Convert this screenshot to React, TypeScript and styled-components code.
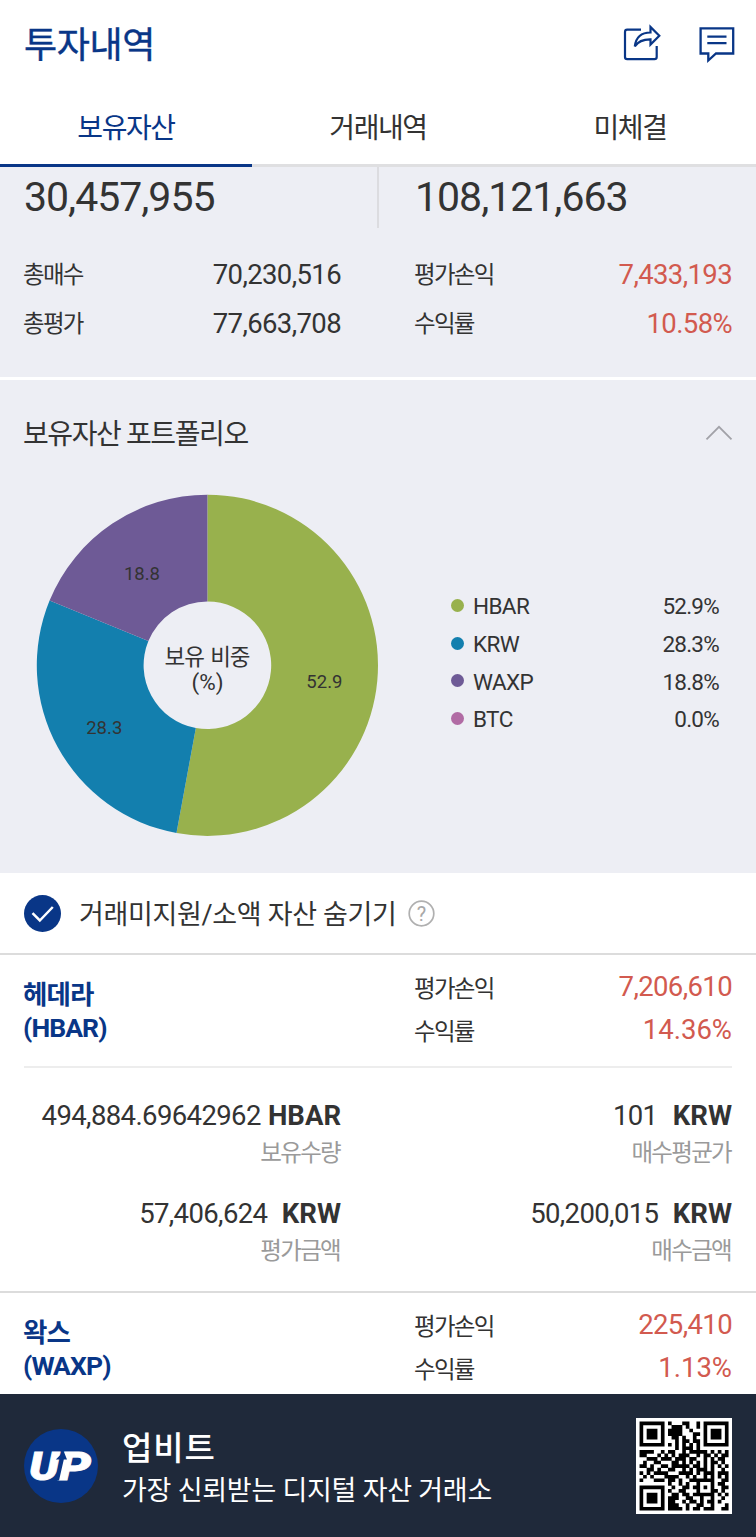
import React from 'react';
import styled, { createGlobalStyle } from 'styled-components';

const ink = '#333333';
const navy = '#093687';
const red = '#d25a4f';
const panel = '#edeef4';

const GlobalStyle = createGlobalStyle`
  body { margin: 0; background: #fff; }
  * { box-sizing: border-box; }
`;

const Page = styled.div`
  width: 756px;
  height: 1537px;
  overflow: hidden;
  display: flex;
  flex-direction: column;
  background: #fff;
  color: ${ink};
  font-family: Roboto, 'Noto Sans CJK KR', sans-serif;
`;

const Header = styled.header`
  display: flex;
  align-items: center;
  justify-content: space-between;
  height: 88px;
  padding: 0 19px 0 24px;
  color: ${navy};
`;

const Title = styled.h1`
  margin: 0;
  padding-top: 4px;
  font-size: 36px;
  line-height: 48px;
  font-weight: 400;
  letter-spacing: -0.4px;
  -webkit-text-stroke: 0.4px ${navy};
`;

const Actions = styled.div`
  display: flex;
  gap: 36px;
`;

const Tabs = styled.nav`
  display: flex;
  height: 79px;
  border-bottom: 3px solid #dfdfe1;
`;

const Tab = styled.div<{ $active?: boolean }>`
  flex: 1;
  height: 79px;
  padding-top: 21px;
  text-align: center;
  font-size: 28px;
  line-height: 40px;
  letter-spacing: -1.4px;
  color: ${(p) => (p.$active ? navy : ink)};
  border-bottom: ${(p) => (p.$active ? `3px solid ${navy}` : '0')};
`;

const Summary = styled.section`
  height: 210px;
  background: ${panel};
`;

const Totals = styled.div`
  display: flex;
  height: 61px;
`;

const Total = styled.div<{ $divided?: boolean }>`
  width: ${(p) => (p.$divided ? 379 : 377)}px;
  padding-left: ${(p) => (p.$divided ? 24 : 36)}px;
  border-right: ${(p) => (p.$divided ? '2px solid #dcdce0' : '0')};
  font-size: 41px;
  line-height: 61px;
  letter-spacing: -1px;
`;

const StatGrid = styled.div`
  display: grid;
  grid-template-columns: 317px 317px;
  column-gap: 74px;
  grid-auto-rows: 48.5px;
  padding: 23px 24px 0;
`;

const Stat = styled.div`
  display: flex;
  justify-content: space-between;
  align-items: center;
`;

const Label = styled.span<{ $muted?: boolean; $drop?: boolean }>`
  margin: ${(p) => (p.$muted ? '-3px 1px 0 0' : p.$drop ? '5px 0 0 -1px' : '0 0 0 -1px')};
  font-size: 23.5px;
  line-height: 32px;
  letter-spacing: -1.7px;
  color: ${(p) => (p.$muted ? '#9a9a9a' : ink)};
`;

const Amount = styled.span<{ $gain?: boolean; $loose?: boolean }>`
  font-size: 27.5px;
  line-height: 48px;
  letter-spacing: ${(p) => (p.$loose ? 0 : -0.62)}px;
  white-space: pre;
  color: ${(p) => (p.$gain ? red : ink)};
`;

const Unit = styled.b<{ $gap: number }>`
  margin-left: ${(p) => p.$gap}px;
  font-weight: 700;
  letter-spacing: 0;
`;

const Portfolio = styled.section`
  height: 493px;
  margin-top: 3px;
  background: ${panel};
`;

const PortfolioHead = styled.div`
  display: flex;
  justify-content: space-between;
  align-items: center;
  height: 108px;
  padding: 0 23px 0 24px;
`;

const PortfolioTitle = styled.h2`
  margin: 2px 0 0 -1px;
  font-size: 28px;
  font-weight: 400;
  line-height: 40px;
  letter-spacing: -1.4px;
`;

const ChartArea = styled.div`
  display: flex;
  padding: 6px 37px 0 36px;
`;

const Legend = styled.ul`
  flex: 1;
  list-style: none;
  margin: 93px 0 0 72px;
  padding: 0;
`;

const LegendRow = styled.li`
  display: flex;
  align-items: center;
  height: 37.8px;
  font-size: 22.5px;
  line-height: 38px;
  letter-spacing: -0.6px;
`;

const Dot = styled.i<{ $color: string }>`
  width: 13px;
  height: 13px;
  margin: -1px 9px 0 0;
  border-radius: 50%;
  background: ${(p) => p.$color};
`;

const LegendValue = styled.span`
  margin-left: auto;
  letter-spacing: -0.75px;
`;

const FilterBar = styled.div`
  display: flex;
  align-items: center;
  height: 82px;
  padding: 0 24px;
  border-bottom: 2px solid #dcdcdc;
`;

const FilterText = styled.span`
  margin: 4px 11px 0 18px;
  font-size: 27px;
  line-height: 40px;
  letter-spacing: -0.34px;
`;

const AssetHead = styled.div<{ $ruled?: boolean }>`
  display: flex;
  justify-content: space-between;
  height: 113px;
  margin: 0 24px;
  padding-top: 10px;
  border-bottom: ${(p) => (p.$ruled ? '2px solid #ededed' : '0')};
`;

const AssetName = styled.h3`
  margin: 14px 0 0 -1px;
  font-size: 26.5px;
  line-height: 32.5px;
  font-weight: 700;
  letter-spacing: -0.9px;
  color: ${navy};
`;

const AssetStats = styled.div`
  width: 317px;
  display: grid;
  grid-auto-rows: 43px;
`;

const AssetBody = styled.div`
  display: grid;
  grid-template-columns: 317px 317px;
  column-gap: 74px;
  grid-auto-rows: 98px;
  height: 225px;
  padding: 24px 24px 0;
  border-bottom: 2px solid #dcdcdc;
`;

const Holding = styled.div`
  display: flex;
  flex-direction: column;
  align-items: flex-end;
`;

const Footer = styled.footer`
  display: flex;
  align-items: center;
  flex: none;
  height: 143px;
  padding: 0 24px;
  background: #1f293a;
  color: #fff;
`;

const Assets = styled.main`
  flex: none;
  height: 439px;
  overflow: hidden;
`;

const Brand = styled.div`
  flex: 1;
  margin: 8px 0 0 24px;
`;

const BrandName = styled.div`
  font-size: 33px;
  font-weight: 500;
  line-height: 42px;
  letter-spacing: 0.9px;
`;

const BrandLine = styled.div`
  font-size: 27px;
  line-height: 42px;
  letter-spacing: -0.25px;
`;

const slices = [
  { name: 'HBAR', value: 52.9, color: '#98b14d' },
  { name: 'KRW', value: 28.3, color: '#137fae' },
  { name: 'WAXP', value: 18.8, color: '#6e5a96' },
  { name: 'BTC', value: 0, color: '#b16ba4' },
];

const R = 170.6;
const HOLE = 63.8;
const at = (percent: number, radius: number) => {
  const a = (percent / 100) * Math.PI * 2;
  return [171.4 + radius * Math.sin(a), 171.3 - radius * Math.cos(a)];
};

function Donut() {
  let start = 0;
  return (
    <svg width="343" height="343" viewBox="0 0 343 343" fontFamily="Roboto, 'Noto Sans CJK KR', sans-serif" textAnchor="middle" fill={ink}>
      {slices.filter((s) => s.value > 0).map((s) => {
        const end = start + s.value;
        const large = s.value > 50 ? 1 : 0;
        const d = `M${at(start, R)} A${R} ${R} 0 ${large} 1 ${at(end, R)} L${at(end, HOLE)} A${HOLE} ${HOLE} 0 ${large} 0 ${at(start, HOLE)}Z`;
        const [x, y] = at(start + s.value / 2, 117.5);
        start = end;
        return (
          <g key={s.name}>
            <path d={d} fill={s.color} />
            <text x={x} y={y + 12} fontSize="18.5">{s.value}</text>
          </g>
        );
      })}
      <text x="171" y="170.5" fontSize="22.5" letterSpacing="-1.1" wordSpacing="2">보유 비중</text>
      <text x="171.5" y="196" fontSize="22.5">(%)</text>
    </svg>
  );
}

const ShareIcon = () => (
  <svg width="40" height="40" viewBox="0 0 40 40" fill="none" stroke={navy} strokeWidth="2.2" strokeLinejoin="round">
    <path d="M20 5.7H6.2Q4 5.7 4 8V33Q4 35.2 6.2 35.2H33.5Q35.7 35.2 35.7 33V22" />
    <path d="M13.8 22.3C15 13 21 8.5 29.5 8.5V3L38.3 11.8L29.5 20.5V15.3C22 15.2 17 17.5 13.8 22.3Z" strokeLinejoin="miter" />
  </svg>
);

const ChatIcon = () => (
  <svg width="40" height="40" viewBox="0 0 40 40" fill="none" stroke={navy} strokeWidth="2.3">
    <path d="M3.6 4.3H36.2V29.5H19L11.3 36.5V29.5H3.6Z" />
    <path d="M10.3 12.6H29.5M10.3 19.2H29.5" />
  </svg>
);

const ChevronUp = () => (
  <svg width="28" height="18" viewBox="0 0 28 18" fill="none" stroke="#a2a2a8" strokeWidth="1.8">
    <path d="M1.5 14.3L14 1.8L26.5 14.3" />
  </svg>
);

const CheckIcon = () => (
  <svg width="37" height="37" viewBox="0 0 37 37">
    <circle cx="18.5" cy="18.5" r="18.5" fill={navy} />
    <path d="M8.5 18.2L15.8 25.5L28.8 12" fill="none" stroke="#fff" strokeWidth="2.5" />
  </svg>
);

const HelpIcon = () => (
  <svg width="27" height="27" viewBox="0 0 27 27">
    <circle cx="13.5" cy="13.5" r="12.3" fill="none" stroke="#b0b0b0" strokeWidth="1.7" />
    <text x="13.5" y="20.5" textAnchor="middle" fontFamily="Roboto, sans-serif" fontSize="20" fill="#a8a8a8">?</text>
  </svg>
);

const Logo = () => (
  <svg width="74" height="74" viewBox="0 0 74 74">
    <circle cx="37" cy="37" r="37" fill={navy} />
    <g fontFamily="Roboto, sans-serif" fontWeight="900" fontStyle="italic" fontSize="38.5" fill="#fff" stroke="#fff" strokeWidth="0.8">
      <text x="5" y="50.5" textLength="30" lengthAdjust="spacingAndGlyphs">U</text>
      <text x="34" y="50.5" textLength="33" lengthAdjust="spacingAndGlyphs">P</text>
    </g>
    <path d="M31.5 51.5L36.3 30.5H31.8L39.8 22.5L43 30.5H39.8L35 51.5Z" fill={navy} />
  </svg>
);

const qrRows = [
  '1111111010001100101111111',
  '1000001001110100101000001',
  '1011101011110010001011101',
  '1011101011110001101011101',
  '1011101001101001001011101',
  '1000001000101101101000001',
  '1111111010101010101111111',
  '0000000000101110100000000',
  '1111001011001011111010101',
  '1100010101011100101101011',
  '0011101110111011001010110',
  '0100110001101010101011010',
  '1101001101111101101010101',
  '0011010011001010111010010',
  '1010111100011110101110111',
  '0101000111100101001010101',
  '1000111011010011111110011',
  '0000000010010100100010110',
  '1111111001001101101010011',
  '1000001010011000100011010',
  '1011101001101101111110101',
  '1011101011100110010010010',
  '1011101011001011010110100',
  '1000001011100100110010001',
  '1111111011110101101110011',
];

const Qr = () => (
  <svg width="96" height="96" viewBox="0 0 27 27">
    <rect width="27" height="27" fill="#fff" />
    <path
      fill="#000"
      d={qrRows.flatMap((row, y) => [...row].map((c, x) => (c === '1' ? `M${x + 1} ${y + 1}h1.03v1.03h-1.03z` : ''))).join('')}
    />
  </svg>
);

type StatProps = { label: string; value: string; gain?: boolean; drop?: boolean; loose?: boolean };

const StatLine = ({ label, value, gain, drop, loose }: StatProps) => (
  <Stat>
    <Label $drop={drop}>{label}</Label>
    <Amount $gain={gain} $loose={loose}>{value}</Amount>
  </Stat>
);

const HoldingItem = ({ value, unit, label, gap = 2 }: { value: string; unit: string; label: string; gap?: number }) => (
  <Holding>
    <Amount>{value}<Unit $gap={gap}>{unit}</Unit></Amount>
    <Label $muted>{label}</Label>
  </Holding>
);

const AssetHeader = (p: { name: string; code: string; profit: string; rate: string; ruled?: boolean }) => (
  <AssetHead $ruled={p.ruled}>
    <AssetName>{p.name}<br />({p.code})</AssetName>
    <AssetStats>
      <StatLine label="평가손익" value={p.profit} gain drop />
      <StatLine label="수익률" value={p.rate} gain drop loose />
    </AssetStats>
  </AssetHead>
);

export default function App() {
  return (
    <Page>
      <GlobalStyle />
      <Header>
        <Title>투자내역</Title>
        <Actions><ShareIcon /><ChatIcon /></Actions>
      </Header>
      <Tabs>
        <Tab $active>보유자산</Tab>
        <Tab>거래내역</Tab>
        <Tab>미체결</Tab>
      </Tabs>
      <Summary>
        <Totals>
          <Total $divided>30,457,955</Total>
          <Total>108,121,663</Total>
        </Totals>
        <StatGrid>
          <StatLine label="총매수" value="70,230,516" />
          <StatLine label="평가손익" value="7,433,193" gain />
          <StatLine label="총평가" value="77,663,708" />
          <StatLine label="수익률" value="10.58%" gain />
        </StatGrid>
      </Summary>
      <Portfolio>
        <PortfolioHead>
          <PortfolioTitle>보유자산 포트폴리오</PortfolioTitle>
          <ChevronUp />
        </PortfolioHead>
        <ChartArea>
          <Donut />
          <Legend>
            {slices.map((s) => (
              <LegendRow key={s.name}>
                <Dot $color={s.color} />
                {s.name}
                <LegendValue>{s.value.toFixed(1)}%</LegendValue>
              </LegendRow>
            ))}
          </Legend>
        </ChartArea>
      </Portfolio>
      <FilterBar>
        <CheckIcon />
        <FilterText>거래미지원/소액 자산 숨기기</FilterText>
        <HelpIcon />
      </FilterBar>
      <Assets>
        <AssetHeader name="헤데라" code="HBAR" profit="7,206,610" rate="14.36%" ruled />
        <AssetBody>
          <HoldingItem value="494,884.69642962 " unit="HBAR" label="보유수량" gap={1} />
          <HoldingItem value="101  " unit="KRW" label="매수평균가" gap={3} />
          <HoldingItem value="57,406,624  " unit="KRW" label="평가금액" />
          <HoldingItem value="50,200,015  " unit="KRW" label="매수금액" />
        </AssetBody>
        <AssetHeader name="왁스" code="WAXP" profit="225,410" rate="1.13%" />
      </Assets>
      <Footer>
        <Logo />
        <Brand>
          <BrandName>업비트</BrandName>
          <BrandLine>가장 신뢰받는 디지털 자산 거래소</BrandLine>
        </Brand>
        <Qr />
      </Footer>
    </Page>
  );
}
